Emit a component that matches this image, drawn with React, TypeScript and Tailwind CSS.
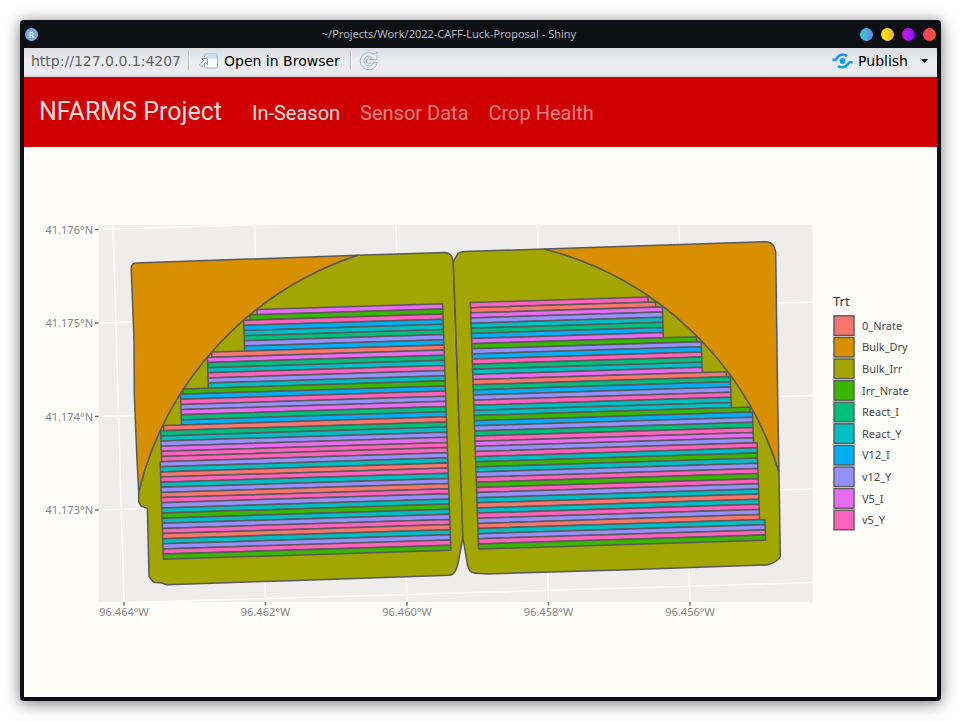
import React from "react";

type Treatment = { name: string; color: string };

const TREATMENTS: Treatment[] = [
  { name: "0_Nrate", color: "#f8766d" },
  { name: "Bulk_Dry", color: "#d89000" },
  { name: "Bulk_Irr", color: "#a3a500" },
  { name: "Irr_Nrate", color: "#39b600" },
  { name: "React_I", color: "#00bf7d" },
  { name: "React_Y", color: "#00bfc4" },
  { name: "V12_I", color: "#00b0f6" },
  { name: "v12_Y", color: "#9590ff" },
  { name: "V5_I", color: "#e76bf3" },
  { name: "v5_Y", color: "#ff62bc" },
];

// One letter per strip, north to south.
const CODES: Record<string, string> = {
  n: "#f8766d",
  g: "#39b600",
  i: "#00bf7d",
  y: "#00bfc4",
  b: "#00b0f6",
  v: "#9590ff",
  m: "#e76bf3",
  p: "#ff62bc",
};

const WEST = "mgpbyivbnmiypvygbpvmibniyvmppvynpyvnpvygyvpnyvpg";
const EAST = "pnmvyibmgvbpiymnibvpyygbvipmvpygyvpgpvynypvnyvpg";

const PITCH = 5.14;
const SLOPE = -0.0312;
const OUTLINE = "#595959";

function westStart(k: number): number {
  if (k === 0) return 257;
  if (k === 1) return 250;
  if (k < 8) return 243.7 + (k - 2) * 0.15;
  if (k === 8) return 211.7;
  if (k < 15) return 207.4 + (k - 9) * 0.15;
  if (k === 15) return 183;
  if (k < 22) return 180.5 + (k - 16) * 0.17;
  if (k === 22) return 163.6;
  if (k < 29) return 160.7 + (k - 23) * 0.17;
  return 160.2 + (k - 29) * 0.17;
}

function eastEnd(k: number): number {
  if (k === 0) return 648;
  if (k === 1) return 655.6;
  if (k < 8) return 662.4 + (k - 2) * 0.15;
  if (k === 8) return 696.5;
  if (k < 15) return 701.3 + (k - 9) * 0.15;
  if (k === 15) return 726.3;
  if (k < 22) return 730.3 + (k - 16) * 0.17;
  if (k === 22) return 750;
  if (k < 29) return 752.4 + (k - 23) * 0.17;
  if (k < 44) return 757 + (k - 29) * 0.17;
  return 764.9 + (k - 44) * 0.17;
}

function strip(x0: number, x1: number, anchorX: number, top: number): string {
  const y = (x: number) => top + (x - anchorX) * SLOPE;
  return `${x0},${y(x0)} ${x1},${y(x1)} ${x1 + 0.17},${y(x1) + PITCH} ${x0 + 0.17},${y(x0) + PITCH}`;
}

const LONGITUDES = [
  { x: 124, label: "96.464°W" },
  { x: 265.5, label: "96.462°W" },
  { x: 407, label: "96.460°W" },
  { x: 548.5, label: "96.458°W" },
  { x: 690, label: "96.456°W" },
];

const LATITUDES = [
  { y: 229.5, label: "41.176°N" },
  { y: 323, label: "41.175°N" },
  { y: 416.5, label: "41.174°N" },
  { y: 510, label: "41.173°N" },
];

function FieldMap() {
  return (
    <svg
      viewBox="24 147 913 550"
      className="block w-full font-['Noto_Sans','Open_Sans',sans-serif]"
      role="img"
      aria-label="Field treatment map"
    >
      <defs>
        <clipPath id="panel">
          <rect x="98.5" y="225" width="714" height="377" />
        </clipPath>
      </defs>
      <rect x="98.5" y="225" width="714" height="377" fill="#eeedec" />
      <g clipPath="url(#panel)" stroke="#fffefb" strokeWidth="1.5">
        {LONGITUDES.map((t) => (
          <line key={t.label} x1={t.x - 11} y1="225" x2={t.x} y2="602" />
        ))}
        {[...LATITUDES.map((t) => t.y), 603.5].map((y) => (
          <line key={y} x1="98.5" y1={y} x2="812.5" y2={y - 21} />
        ))}
      </g>

      <g stroke={OUTLINE} strokeWidth="1.5" strokeLinejoin="round">
        <path
          fill="#a3a500"
          d="M357.500 255.300L445 252.400Q449.500 252.600 451.700 256.500L453.200 261.500L458.300 400L463 535L462 542L458.300 562Q456 574.500 450 575.200L290 580.700L167 584.700L161.500 583L153.500 582.300L149 576.500L147.400 508.400L141 506L138.700 501.700V491.700A333.500 333.500 0 0 1 357.500 255.300Z"
        />
        <path
          fill="#d89000"
          d="M131.200 268Q131.300 263.400 136 263L357.500 255.300A333.500 333.500 0 0 0 138.700 491.700L137 460L134.300 395L134 340Z"
        />
        <path
          fill="#a3a500"
          d="M453.300 261.500L457.500 254Q458.300 252.500 465 251.500L544.500 249A332.500 332.500 0 0 1 779 471.700L780.300 556.500Q778 562 767 565L620 570L487 574L474 572.900Q469 572.500 467.300 564L462.800 537L458.300 400Z"
        />
        <path
          fill="#d89000"
          d="M544.500 249L620 246.400L767 241.700Q774.500 242.500 775.700 252L777.700 400L779 471.700A332.500 332.500 0 0 0 544.500 249Z"
        />
        {[...WEST].map((c, k) => (
          <polygon
            key={`w${k}`}
            fill={CODES[c]}
            points={strip(westStart(k), 442.6 + k * 0.17, 442.6, 303.8 + k * PITCH)}
          />
        ))}
        {[...EAST].map((c, k) => (
          <polygon
            key={`e${k}`}
            fill={CODES[c]}
            points={strip(470.4 + k * 0.17, eastEnd(k), 470.4, 302.6 + k * PITCH)}
          />
        ))}
      </g>

      <g stroke="#6b6b6b" strokeWidth="1.5">
        {LONGITUDES.map((t) => (
          <line key={t.label} x1={t.x} y1="602" x2={t.x} y2="605.5" />
        ))}
        {LATITUDES.map((t) => (
          <line key={t.label} x1="95" y1={t.y} x2="98.500" y2={t.y} />
        ))}
      </g>
      <g fill="#858585" fontSize="11">
        {LONGITUDES.map((t) => (
          <text key={t.label} x={t.x} y="616" textAnchor="middle">
            {t.label}
          </text>
        ))}
        {LATITUDES.map((t) => (
          <text key={t.label} x="93" y={t.y + 4} textAnchor="end">
            {t.label}
          </text>
        ))}
      </g>

      <text x="833" y="306" fontSize="13" fill="#333333">
        Trt
      </text>
      {TREATMENTS.map((t, k) => (
        <g key={t.name}>
          <rect
            x="834"
            y={315.8 + k * 21.6}
            width="20"
            height="19.6"
            fill={t.color}
            stroke={OUTLINE}
            strokeWidth="1.4"
          />
          <text x="862" y={329.7 + k * 21.6} fontSize="11" fill="#484848">
            {t.name}
          </text>
        </g>
      ))}
    </svg>
  );
}

function TitleBar() {
  return (
    <header className="flex h-7 items-center justify-between px-px">
      <svg viewBox="0 0 13 13" className="size-[13px]" aria-hidden="true">
        <circle cx="6.5" cy="6.5" r="6.500" fill="#75aadb" />
        <text
          x="6.5"
          y="9.500"
          textAnchor="middle"
          fontSize="9"
          fill="#ffffff"
          className="font-['Liberation_Serif',serif]"
        >
          R
        </text>
      </svg>
      <h1 className="flex-1 text-center font-['Noto_Sans','Open_Sans',sans-serif] text-[11px] text-[#b4b8bd]">
        ~/Projects/Work/2022-CAFF-Luck-Proposal - Shiny
      </h1>
      <div className="flex gap-2">
        <button aria-label="Shade" className="size-[13px] rounded-full bg-linear-to-r from-[#36c9d3] to-[#5b87e5]" />
        <button aria-label="Minimize" className="size-[13px] rounded-full bg-linear-to-r from-[#faf000] to-[#ffb128]" />
        <button aria-label="Maximize" className="size-[13px] rounded-full bg-linear-to-r from-[#d400d4] to-[#8000ff]" />
        <button aria-label="Close" className="size-[13px] rounded-full bg-linear-to-r from-[#ff3f60] to-[#ff4d28]" />
      </div>
    </header>
  );
}

function Divider() {
  return <span className="h-5 w-[2px] border-l border-r border-l-[#b9bbbf] border-r-white" />;
}

function Toolbar() {
  return (
    <div className="flex h-[29px] items-center border-b-2 border-[#d6d9de] bg-linear-to-b from-[#dcdde2] to-[#ebecef] to-50% pr-[9px] pb-[2px] pl-[7px] font-['DejaVu_Sans',sans-serif] text-[14px] leading-5">
      <span className="mr-[7px] text-[#606060]">http://127.0.0.1:4207</span>
      <Divider />
      <button className="ml-[9px] flex items-center gap-[6px] text-black">
        <svg viewBox="0 0 19 16" className="h-4 w-[19px]" aria-hidden="true">
          <rect x="5.500" y="1" width="13" height="14" rx="1.500" fill="#f8fafc" stroke="#9fb4c8" />
          <path d="M6 5.500V2.500Q6 1.500 7 1.500H17Q18 1.500 18 2.500V5.500Z" fill="#c9e2f8" />
          <path
            d="M2.500 5.500H8.500V11.500L6.500 9.500L2.500 14L.5 12L4.500 7.500Z"
            fill="#eef2f6"
            stroke="#8b9db0"
          />
        </svg>
        Open in Browser
      </button>
      <span className="w-[10px]" />
      <Divider />
      <button aria-label="Reload" className="ml-[7px]">
        <svg viewBox="0 0 20 20" className="size-5" fill="none" aria-hidden="true">
          <path
            d="M15 3.300A8.600 8.600 0 1 0 18.300 11.500H14.500A4.900 4.900 0 1 1 12.600 6L10.500 8.500H18V1Z"
            fill="#e8f0fa"
            stroke="#a3b5ca"
            strokeLinejoin="round"
          />
          <path d="M9.500 7.500A2.600 2.600 0 1 0 12 11.500" stroke="#a3b5ca" />
        </svg>
      </button>
      <button className="ml-auto flex items-center gap-[5px] text-black">
        <svg viewBox="0 0 21 16" className="h-4 w-[21px]" fill="none" aria-hidden="true">
          <circle cx="10.500" cy="8" r="2.900" fill="#119bea" />
          <path
            d="M.5 6.900H3.300C5 6.900 4.700 1.700 10.700 1.700Q13.500 1.700 15 3.200M20.500 9.300H17.700C16 9.300 16.300 14.300 10.300 14.300Q7.500 14.300 6 12.800"
            stroke="#119bea"
            strokeWidth="2.600"
          />
        </svg>
        Publish
      </button>
      <button aria-label="Publish options" className="ml-[13px] flex h-5 items-center">
        <svg viewBox="0 0 7 4" className="h-1 w-[7px]" aria-hidden="true">
          <path d="M0 0H7L3.500 4Z" fill="#111111" />
        </svg>
      </button>
    </div>
  );
}

export default function App() {
  return (
    <div className="min-h-screen bg-white p-5">
      <main className="rounded-[4px] bg-[#0c0f14] px-1 pb-1 shadow-[0_2px_16px_rgba(0,0,0,0.55)]">
        <TitleBar />
        <Toolbar />
        <nav className="flex h-[70px] items-baseline bg-[#d00000] px-[15px] pt-4 font-['Roboto',sans-serif] text-[20px]">
          <a href="#" className="mr-[30px] text-[25px] text-[#fadddd]">
            NFARMS Project
          </a>
          <div className="flex gap-5">
            <a href="#in-season" className="text-[#fadddd]">In-Season</a>
            <a href="#sensor-data" className="text-[#ea8080]">Sensor Data</a>
            <a href="#crop-health" className="text-[#ea8080]">Crop Health</a>
          </div>
        </nav>
        <section className="bg-[#fffdf9]">
          <FieldMap />
        </section>
      </main>
    </div>
  );
}
